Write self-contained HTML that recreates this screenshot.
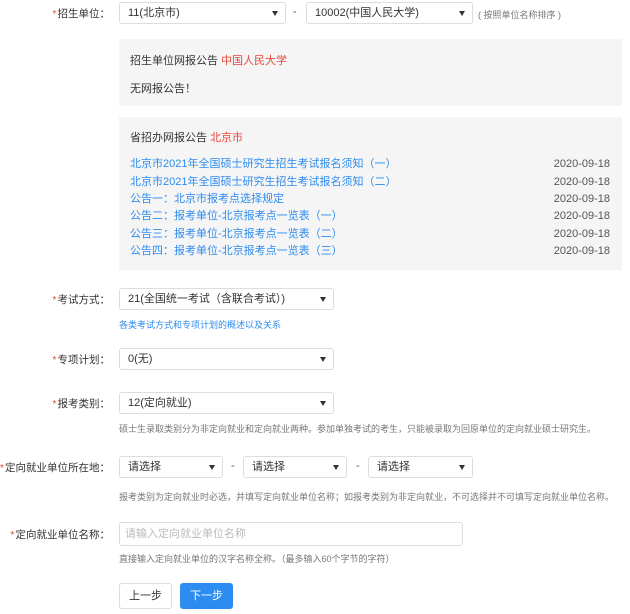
<!DOCTYPE html>
<html><head><meta charset="utf-8"><style>
body{margin:0;width:630px;height:614px;background:#fff;font-family:"Liberation Sans","Noto Sans CJK SC",sans-serif;font-size:11px;color:#333;position:relative;overflow:hidden}
.a{position:absolute;white-space:nowrap}
.lbl{position:absolute;right:520px;font-size:10.5px;color:#333;white-space:nowrap}
.lbl b{color:#e8473a;font-weight:normal;margin-right:1px}
.sel{position:absolute;height:22px;border:1px solid #ddd;border-radius:3px;box-sizing:border-box;background:#fff;line-height:20px;padding-left:8px;font-size:11px}
.sel:after{content:"";position:absolute;right:7px;top:8px;border-left:3px solid transparent;border-right:3px solid transparent;border-top:5px solid #333}
.inp{position:absolute;height:24px;border:1px solid #ddd;border-radius:3px;box-sizing:border-box;background:#fff;line-height:22px;padding-left:5px;font-size:11px;color:#bbb}
.hint{position:absolute;font-size:9px;color:#777;white-space:nowrap}
.box{position:absolute;left:119px;width:503px;background:#f5f5f5}
.row{position:absolute;left:130px;width:480px;font-size:11px;color:#2d8cf0;height:16px;line-height:16px;display:flex;justify-content:space-between;white-space:nowrap}
.row span{color:#555}
.red{color:#e8473a}
</style></head><body>
<div class="lbl" style="top:6px"><b>*</b>招生单位：</div>
<div class="sel" style="left:119px;top:2px;width:167px">11(北京市)</div>
<div class="a" style="left:293px;top:6px;color:#555">-</div>
<div class="sel" style="left:306px;top:2px;width:167px">10002(中国人民大学)</div>
<div class="hint" style="left:478px;top:8px">( 按照单位名称排序 )</div>

<div class="box" style="top:39px;height:67px"></div>
<div class="a" style="left:130px;top:52px">招生单位网报公告 <span class="red">中国人民大学</span></div>
<div class="a" style="left:130px;top:80px">无网报公告！</div>

<div class="box" style="top:117px;height:153px"></div>
<div class="a" style="left:130px;top:129px">省招办网报公告 <span class="red">北京市</span></div>
<div class="row" style="top:156px">北京市2021年全国硕士研究生招生考试报名须知（一）<span>2020-09-18</span></div>
<div class="row" style="top:174px">北京市2021年全国硕士研究生招生考试报名须知（二）<span>2020-09-18</span></div>
<div class="row" style="top:191px">公告一：北京市报考点选择规定<span>2020-09-18</span></div>
<div class="row" style="top:208px">公告二：报考单位-北京报考点一览表（一）<span>2020-09-18</span></div>
<div class="row" style="top:226px">公告三：报考单位-北京报考点一览表（二）<span>2020-09-18</span></div>
<div class="row" style="top:243px">公告四：报考单位-北京报考点一览表（三）<span>2020-09-18</span></div>

<div class="lbl" style="top:292px"><b>*</b>考试方式：</div>
<div class="sel" style="left:119px;top:288px;width:215px">21(全国统一考试（含联合考试）)</div>
<div class="hint" style="left:119px;top:318px;color:#2d8cf0">各类考试方式和专项计划的概述以及关系</div>

<div class="lbl" style="top:352px"><b>*</b>专项计划：</div>
<div class="sel" style="left:119px;top:348px;width:215px">0(无)</div>

<div class="lbl" style="top:396px"><b>*</b>报考类别：</div>
<div class="sel" style="left:119px;top:392px;width:215px">12(定向就业)</div>
<div class="hint" style="left:119px;top:422px">硕士生录取类别分为非定向就业和定向就业两种。参加单独考试的考生，只能被录取为回原单位的定向就业硕士研究生。</div>

<div class="lbl" style="top:460px"><b>*</b>定向就业单位所在地：</div>
<div class="sel" style="left:119px;top:456px;width:104px">请选择</div>
<div class="a" style="left:231px;top:460px;color:#555">-</div>
<div class="sel" style="left:243px;top:456px;width:104px">请选择</div>
<div class="a" style="left:356px;top:460px;color:#555">-</div>
<div class="sel" style="left:368px;top:456px;width:105px">请选择</div>
<div class="hint" style="left:119px;top:490px">报考类别为定向就业时必选，并填写定向就业单位名称；如报考类别为非定向就业，不可选择并不可填写定向就业单位名称。</div>

<div class="lbl" style="top:527px"><b>*</b>定向就业单位名称：</div>
<div class="inp" style="left:119px;top:522px;width:344px">请输入定向就业单位名称</div>
<div class="hint" style="left:119px;top:552px">直接输入定向就业单位的汉字名称全称。（最多输入60个字节的字符）</div>

<div class="a" style="left:119px;top:583px;width:53px;height:26px;border:1px solid #ddd;border-radius:3px;box-sizing:border-box;text-align:center;line-height:24px">上一步</div>
<div class="a" style="left:180px;top:583px;width:53px;height:26px;background:#2d8cf0;border-radius:3px;color:#fff;text-align:center;line-height:26px">下一步</div>
</body></html>
